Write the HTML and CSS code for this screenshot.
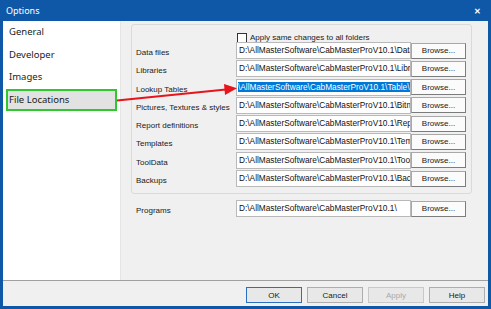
FILE: index.html
```html
<!DOCTYPE html>
<html lang="en">
<head>
    <meta charset="UTF-8">
    <title>Options</title>
    <link rel="stylesheet" href="styles.css">
</head>
<body>
    <div class="window">
        <div class="titlebar">
            <span class="title">Options</span>
            <span class="close">&#x2715;</span>
        </div>

        <div class="main">
            <!-- Page list -->
            <ul class="sidebar">
                <li>General</li>
                <li>Developer</li>
                <li>Images</li>
                <li class="selected">File Locations</li>
            </ul>

            <div class="content">
                <div class="group">
                    <label class="check-row">
                        <span class="checkbox"></span>
                        Apply same changes to all folders
                    </label>

                    <div class="rows">
                        <span class="label">Data files</span>
                        <div class="field">D:\AllMasterSoftware\CabMasterProV10.1\Data\</div>
                        <button>Browse...</button>

                        <span class="label">Libraries</span>
                        <div class="field">D:\AllMasterSoftware\CabMasterProV10.1\Libraries\</div>
                        <button>Browse...</button>

                        <span class="label">Lookup Tables</span>
                        <div class="field active"><span class="sel">\AllMasterSoftware\CabMasterProV10.1\Table\</span></div>
                        <button>Browse...</button>

                        <span class="label">Pictures, Textures &amp; styles</span>
                        <div class="field">D:\AllMasterSoftware\CabMasterProV10.1\Bitmaps\</div>
                        <button>Browse...</button>

                        <span class="label">Report definitions</span>
                        <div class="field">D:\AllMasterSoftware\CabMasterProV10.1\Reports\</div>
                        <button>Browse...</button>

                        <span class="label">Templates</span>
                        <div class="field">D:\AllMasterSoftware\CabMasterProV10.1\Templates\</div>
                        <button>Browse...</button>

                        <span class="label">ToolData</span>
                        <div class="field">D:\AllMasterSoftware\CabMasterProV10.1\ToolData\</div>
                        <button>Browse...</button>

                        <span class="label">Backups</span>
                        <div class="field">D:\AllMasterSoftware\CabMasterProV10.1\Backups\</div>
                        <button>Browse...</button>
                    </div>
                </div>

                <div class="rows programs">
                    <span class="label">Programs</span>
                    <div class="field">D:\AllMasterSoftware\CabMasterProV10.1\</div>
                    <button>Browse...</button>
                </div>
            </div>
        </div>

        <div class="footer">
            <button class="default">OK</button>
            <button>Cancel</button>
            <button disabled>Apply</button>
            <button>Help</button>
        </div>

        <!-- red pointer from the selected page to the highlighted field -->
        <svg class="arrow" width="491" height="309" viewBox="0 0 491 309">
            <line x1="117" y1="100.5" x2="226" y2="89.5" stroke="#e8141c" stroke-width="2"/>
            <polygon points="237,88.3 224,84 225,95" fill="#e8141c"/>
        </svg>
    </div>
</body>
</html>
```

FILE: styles.css
```css
body {
    margin: 0;
    font-family: 'Liberation Sans', Arial, sans-serif;
}

.window {
    position: relative;
    width: 491px;
    height: 309px;
    box-sizing: border-box;
    padding: 0 3px 3px;
    background-color: #0f58a8;
    display: flex;
    flex-direction: column;
}

.titlebar {
    height: 21px;
    display: flex;
    align-items: center;
    justify-content: space-between;
    padding: 0 7px 0 3px;
    color: #fff;
    font-family: 'Noto Sans', sans-serif;
    font-size: 9px;
}

.close {
    font-size: 8px;
    font-weight: bold;
}

.main {
    flex: 1;
    display: flex;
    background-color: #f0f0f0;
}

.sidebar {
    width: 117px;
    margin: 0;
    padding: 0;
    list-style: none;
    background-color: #fff;
    border-right: 1px solid #e6e6e6;
    font-family: 'Noto Sans', sans-serif;
    font-size: 9.5px;
    color: #1a1a1a;
}

.sidebar li {
    height: 22.6px;
    line-height: 22.6px;
    margin: 0 3px;
    padding-left: 3px;
    box-sizing: border-box;
}

.sidebar li.selected {
    background-color: #e2e2e2;
    border: 2px solid #2fc82f;
    line-height: 18.6px;
    padding-left: 1px;
}

.content {
    flex: 1;
    padding: 3px 16px 0 10px;
    font-size: 8px;
    color: #1a1a1a;
}

.group {
    height: 170px;
    box-sizing: border-box;
    border: 1px solid #dadada;
    border-radius: 3px;
    padding: 8px 0 0 4px;
}

.check-row {
    display: flex;
    align-items: center;
    gap: 3px;
    height: 9px;
    margin-left: 101px;
}

.checkbox {
    width: 8px;
    height: 8px;
    border: 1px solid #333;
    background-color: #fff;
}

.rows {
    display: grid;
    grid-template-columns: 100px 175px 55px;
    grid-auto-rows: 17px;
    row-gap: 1.3px;
    align-items: center;
}

.label {
    padding-top: 4px;
}

.field {
    height: 17px;
    box-sizing: border-box;
    border: 1px solid #b9b9b9;
    background-color: #fff;
    padding: 0 2px;
    font-size: 8.3px;
    line-height: 15px;
    color: #111;
    white-space: nowrap;
    overflow: hidden;
}

.field.active {
    padding: 0 1px;
}

.sel {
    background-color: #0078d7;
    color: #fff;
}

.rows button {
    height: 16px;
}

button {
    font-family: 'Liberation Sans', Arial, sans-serif;
    font-size: 8px;
    color: #1a1a1a;
    background-color: #fbfbfb;
    border: 1px solid #a8a8a8;
    border-right-color: #7c7c7c;
    border-bottom-color: #7c7c7c;
    padding: 0;
}

.programs {
    margin-top: 6px;
    padding-left: 5px;
}

.footer {
    height: 26px;
    box-sizing: border-box;
    border-top: 1px solid #a0a0a0;
    background-color: #f0f0f0;
    display: flex;
    justify-content: flex-end;
    gap: 5px;
    padding: 6px 3px 0 0;
}

.footer button {
    width: 56px;
    height: 16px;
    background-color: #e8e8e8;
    border: 1px solid #adadad;
}

.footer button.default {
    border-color: #2a6fc1;
}

.footer button:disabled {
    color: #a8a8a8;
    border-color: #c8c8c8;
}

.arrow {
    position: absolute;
    top: 0;
    left: 0;
    pointer-events: none;
}
```
